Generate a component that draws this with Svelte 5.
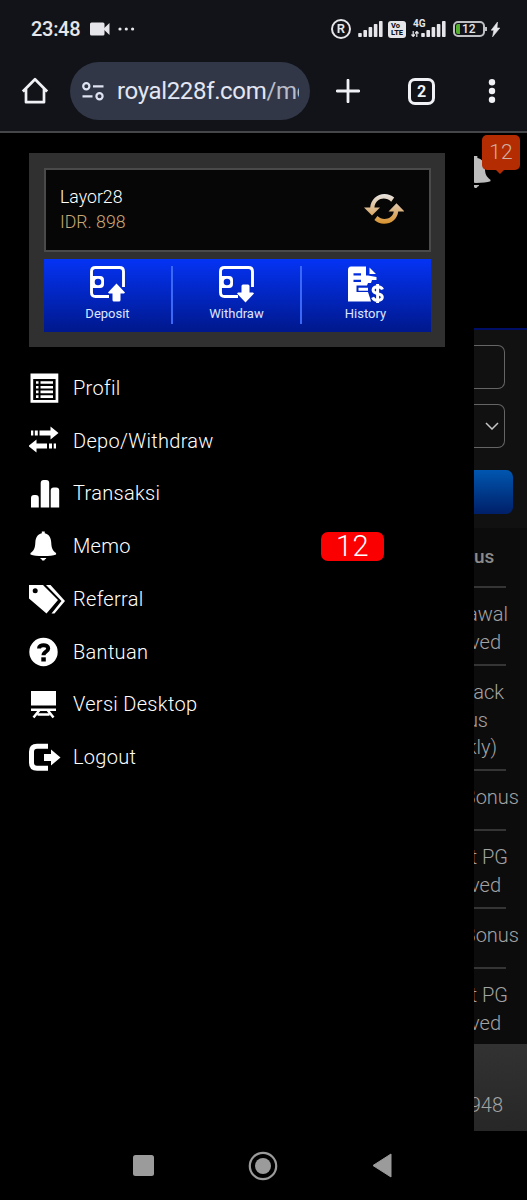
<script lang="ts">
    type Line = { text: string; gap: number };
    type Row = { height: number; lines: Line[] };

    const actions = [
        { id: "deposit", label: "Deposit" },
        { id: "withdraw", label: "Withdraw" },
        { id: "history", label: "History" },
    ];

    const menu = [
        { id: "profile", label: "Profil" },
        { id: "transfer", label: "Depo/Withdraw" },
        { id: "chart", label: "Transaksi" },
        { id: "bell", label: "Memo", count: 12 },
        { id: "tags", label: "Referral" },
        { id: "help", label: "Bantuan" },
        { id: "desktop", label: "Versi Desktop" },
        { id: "logout", label: "Logout" },
    ];

    // gap = space between the end of the line and the screen edge
    const rows: Row[] = [
        { height: 78, lines: [{ text: "awal", gap: 19 }, { text: "ved", gap: 26 }] },
        { height: 105, lines: [{ text: "ack", gap: 23 }, { text: "us", gap: 39 }, { text: "kly)", gap: 30 }] },
        { height: 60, lines: [{ text: "Bonus", gap: 8 }] },
        { height: 78, lines: [{ text: "t PG", gap: 19 }, { text: "ved", gap: 26 }] },
        { height: 60, lines: [{ text: "Bonus", gap: 8 }] },
        { height: 77, lines: [{ text: "t PG", gap: 19 }, { text: "ved", gap: 26 }] },
    ];

    const bars = [4, 7, 10, 13, 16];
</script>

{#snippet signal()}
    <svg class="signal" width="25" height="16" viewBox="0 0 25 16">
        {#each bars as h, i}
            <rect x={i * 5.2 + 0.2} y={16 - h} width="3.6" height={h} rx="0.8" />
        {/each}
    </svg>
{/snippet}

{#snippet bell()}
    <path d="M12.500 0h3v1.700c4.500.8 6.500 4.500 6.700 9 .2 6 1.500 7.800 5 10.500v1.300c-3 1-7 1.500-13.200 1.500S3.800 23.500.8 22.500v-1.300c3.500-2.700 4.800-4.500 5-10.500.2-4.500 2.200-8.200 6.700-9z" />
    <path d="M11 26h6c0 1-1 1.200-1.600 1.600-.2 1.200-2.600 1.200-2.800 0-.6-.4-1.600-.6-1.600-1.600z" />
{/snippet}

<div class="phone">
    <header>
        <div class="status">
            <span class="time">23:48</span>
            <svg class="camera" width="20" height="14" viewBox="0 0 20 14">
                <rect width="14.500" height="13" y=".5" rx="1.500" />
                <path d="M14 6.200 19.500 1v12L14 7.800z" />
            </svg>
            <svg class="dots" width="17" height="4" viewBox="0 0 17 4">
                <circle cx="2" cy="2" r="1.600" /><circle cx="8.300" cy="2" r="1.600" /><circle cx="14.600" cy="2" r="1.600" />
            </svg>
            <span class="registered">R</span>
            {@render signal()}
            <span class="volte"><b>Vo</b><b>LTE</b></span>
            <div class="network">
                <svg class="updown" width="8" height="6" viewBox="0 0 8 6">
                    <path d="M2.200 0v5M.5 3.500l1.700 2 1.700-2M5.800 6V1M4.100 2.500l1.700-2 1.700 2" fill="none" stroke="#e6e6ea" stroke-width="1.200" />
                </svg>
                {@render signal()}
                <span class="gen">4G</span>
            </div>
            <div class="battery"><i></i><span>12</span></div>
            <svg class="bolt" width="9" height="15" viewBox="0 0 9 15">
                <path d="M6.500 0 .2 8.200h2.600L1.600 14.800 8.800 6H6z" stroke="#e6e6ea" stroke-width=".6" />
            </svg>
        </div>
        <div class="toolbar">
            <svg class="home" width="28" height="28" viewBox="0 0 28 28">
                <path d="M1.800 14.500 14 2.200l12.200 12.300M5 11.800v13.400h18V11.800" fill="none" stroke="#f0f1f5" stroke-width="2.700" stroke-linejoin="round" />
            </svg>
            <div class="address">
                <svg width="22" height="19" viewBox="0 0 22 19" fill="none" stroke="#e0e4f2" stroke-width="2.200">
                    <circle cx="4.300" cy="4.300" r="3.100" /><path d="M11 4.300h10.500M.5 14.300h10" /><circle cx="17.500" cy="14.300" r="3.100" />
                </svg>
                <span class="url">royal228f.com<em>/mo</em></span>
            </div>
            <svg class="plus" width="24" height="24" viewBox="0 0 24 24">
                <path d="M12 1.200v21.600M1.200 12h21.600" stroke="#f0f1f5" stroke-width="2.800" stroke-linecap="round" />
            </svg>
            <span class="tabs">2</span>
            <svg class="more" width="8" height="26" viewBox="0 0 8 26">
                <circle cx="4" cy="4.300" r="3.200" /><circle cx="4" cy="13" r="3.200" /><circle cx="4" cy="21.700" r="3.200" />
            </svg>
        </div>
    </header>

    <main>
        <nav class="drawer">
            <section class="card">
                <div class="user">
                    <div>
                        <p>Layor28</p>
                        <p class="balance">IDR. 898</p>
                    </div>
                    <svg width="40" height="30" viewBox="0 0 40 30">
                        <defs>
                            <linearGradient id="gold" x1="0" y1="0" x2="0" y2="30" gradientUnits="userSpaceOnUse">
                                <stop offset="0" stop-color="#e6e3e0" />
                                <stop offset=".5" stop-color="#dcb98c" />
                                <stop offset="1" stop-color="#d9922c" />
                            </linearGradient>
                        </defs>
                        <path fill="url(#gold)" d="M0 13.500h6.200C7 5.500 13 0 20.500 0c3.700 0 7 1.300 9.700 3.600l-3 4.200C22 2.200 11.500 3.500 10.400 13.500H16L8 21.500zM40.500 17.500h-6.300C33.400 25 27.500 29.800 20 29.800c-3.700 0-7-1.400-9.600-3.700l3-4C19 27.500 28.500 25 29.800 17.500H24.500l8-8.300z" />
                    </svg>
                </div>
                <div class="actions">
                    {#each actions as action}
                        <button>
                            <svg width="37" height="37" viewBox="0 0 37 37" fill="#fff">
                                {#if action.id === "history"}
                                    <path fill-rule="evenodd" d="M4 .5h15v9h2l8.500 1.500V14H25l-1 3h-3l-1 2.500H9.500v6.500h11.500l2 6 1 3.500H1V4Q1 .5 4 .5zM6.500 9.500H14V7.300H6.500zm0 6.500H14v-2.300H6.500z" />
                                    <path d="M11.500 21.700H21v3h-9.500zM22.500 1.500 29 8h-6.500z" />
                                    <path d="M35.500 23.500c-.8-2-2.500-2.700-4.700-2.700-3 0-4.700 1.300-4.700 3.300 0 5 9.200 2.200 9.200 7 0 2.200-2 3.300-4.600 3.300-2.700 0-4.300-1-5.100-3M30.600 18v19" fill="none" stroke="#fff" stroke-width="3" />
                                {:else}
                                    <path d="M34.500 21V5.500q0-4-4-4h-24q-4 0-4 4v21q0 4 4 4H20" fill="none" stroke="#fff" stroke-width="2.900" />
                                    <path fill-rule="evenodd" d="M2 10h9q4 0 4 4v4q0 4-4 4H2zM9 12.700a3.300 3.300 0 1 0 0 6.600 3.300 3.300 0 1 0 0-6.600z" />
                                    {#if action.id === "deposit"}
                                        <path d="m27.500 17.500 8.500 9-1 1h-3.500V34q0 1.500-1.500 1.500h-5q-1.500 0-1.500-1.500v-6.500H20l-1-1z" />
                                    {:else}
                                        <path d="m27.500 36.500 8.500-9-1-1h-3.500V20q0-1.500-1.500-1.500h-5q-1.500 0-1.500 1.500v6.500H20l-1 1z" />
                                    {/if}
                                {/if}
                            </svg>
                            {action.label}
                        </button>
                    {/each}
                </div>
            </section>

            <ul>
                {#each menu as item}
                    <li>
                        <svg width="38" height="32" viewBox="0 0 38 32" fill="#fff">
                            {#if item.id === "profile"}
                                <path fill-rule="evenodd" d="M1.500 1.500h27.800v29.200H1.500zM4.200 7v21h22.400V7z" />
                                <path d="M7 10.500h2.500M11.500 10.500H24M7 15.200h2.500M11.500 15.200H24M7 19.900h2.500M11.500 19.900H24M7 24.600h2.500M11.500 24.600H24" stroke="#fff" stroke-width="2.600" />
                            {:else if item.id === "transfer"}
                                <path d="M2 5.500h2.300v5H2zM5.800 5.500h3v5h-3zM10.500 5.500h11V1.500l8 6.500-8 6.500v-4h-11zM27 18.500h-2.300v5H27zM23 18.500h-3v5h3zM18 18.500H7.500v-4L-.5 21l8 6.500v-4H18z" />
                            {:else if item.id === "chart"}
                                <path d="M2 30.500V21q0-3 3-3h1.800q3 0 3 3v9.500zM11.700 30.500V6q0-3 3-3h2.500q3 0 3 3v24.500zM21.700 30.500V13.500q0-3 3-3h2.500q3 0 3 3v17z" />
                            {:else if item.id === "bell"}
                                <g transform="translate(.7 1.500) scale(.97 1.020)">{@render bell()}</g>
                            {:else if item.id === "tags"}
                                <path fill-rule="evenodd" d="M0 2h14l15 15L17.500 30.500 0 15.500zM6.200 5.200a2.500 2.500 0 1 0 0 5 2.500 2.500 0 1 0 0-5z" />
                                <path d="M17 2h4.500L36 18 25.500 30.500H22.500L32.500 18z" />
                            {:else if item.id === "help"}
                                <circle cx="14.500" cy="16" r="14.200" />
                                <path d="M10 12.500c0-4.500 9.200-4.500 9.200 0 0 3.500-4.700 2.700-4.700 6.800" fill="none" stroke="#000" stroke-width="4" />
                                <path d="M12.300 21.300h4.500v4.200h-4.500z" fill="#000" />
                            {:else if item.id === "desktop"}
                                <path d="M2 3h25v14.500H2zM2 20.500h25v2.500H2z" />
                                <path d="M10.500 22 4.500 29.500M18.500 22l6 7.500M8.500 26.500h12" fill="none" stroke="#fff" stroke-width="2.500" />
                            {:else}
                                <path d="M19 5.300H8q-5.500 0-5.500 5.500v11q0 5.500 5.500 5.500h11" fill="none" stroke="#fff" stroke-width="5" />
                                <path d="M15 13h7V8.500l9.500 8-9.500 8V20h-7z" />
                            {/if}
                        </svg>
                        <span class="label">{item.label}</span>
                        {#if item.count}
                            <b class="count">{item.count}</b>
                        {/if}
                    </li>
                {/each}
            </ul>
        </nav>

        <aside class="page">
            <div class="top">
                <svg width="17" height="33" viewBox="12 0 17 33" fill="#bdbdbd">
                    <g transform="translate(-2 0) scale(1.120)">{@render bell()}</g>
                </svg>
                <span class="bubble">12</span>
            </div>
            <div class="form">
                <div class="field"></div>
                <div class="field">
                    <svg width="14" height="8" viewBox="0 0 14 8"><path d="m1 1 6 6 6-6" fill="none" stroke="#c4c4c4" stroke-width="1.500" /></svg>
                </div>
                <div class="submit"></div>
            </div>
            <div class="table">
                <div class="head">us</div>
                {#each rows as row}
                    <div class="row" style="height: {row.height}px">
                        {#each row.lines as line}
                            <p style="margin-right: {line.gap}px">{line.text}</p>
                        {/each}
                    </div>
                {/each}
            </div>
            <div class="footer">948</div>
        </aside>
    </main>

    <footer>
        <svg width="21" height="21"><rect width="21" height="21" rx="2.500" /></svg>
        <svg width="30" height="30" viewBox="0 0 30 30">
            <circle cx="15" cy="15" r="13.200" fill="none" stroke="#9b9b9b" stroke-width="2.200" />
            <circle cx="15" cy="15" r="8" />
        </svg>
        <svg width="20" height="25" viewBox="0 0 20 25"><path d="M1 12.500 19 1v23z" stroke="#9b9b9b" stroke-linejoin="round" /></svg>
    </footer>
</div>

<style>
    :global(body) {
        background: #000;
    }

    .phone {
        width: 527px;
        height: 1200px;
        display: flex;
        flex-direction: column;
        overflow: hidden;
        background: #000;
        color: #fff;
        font-family: Roboto, sans-serif;
    }
    .phone * {
        box-sizing: border-box;
    }
    p, ul {
        margin: 0;
        padding: 0;
        list-style: none;
    }
    svg {
        flex: none;
        display: block;
    }

    header {
        height: 133px;
        background: #121318;
        border-bottom: 2px solid #45464a;
    }
    .status {
        height: 58px;
        padding-left: 31px;
        display: flex;
        align-items: center;
        fill: #e6e6ea;
        color: #e6e6ea;
    }
    .time {
        width: 50px;
        font-size: 20px;
        font-weight: 500;
        letter-spacing: -0.3px;
    }
    .camera {
        margin-left: 9px;
    }
    .dots {
        margin-left: 8px;
    }
    .registered {
        width: 20px;
        height: 20px;
        margin-left: 196px;
        border: 2px solid #e6e6ea;
        border-radius: 50%;
        font-size: 13px;
        font-weight: 600;
        line-height: 16px;
        text-align: center;
    }
    .signal {
        margin-left: 7px;
    }
    .volte {
        width: 18px;
        height: 17px;
        margin-left: 5px;
        padding-top: 1px;
        border-radius: 3px;
        background: #e6e6ea;
        color: #121318;
        font-size: 7.500px;
        line-height: 7.500px;
        display: flex;
        flex-direction: column;
        align-items: center;
    }
    .volte b {
        font-weight: 800;
    }
    .volte b:first-child {
        align-self: flex-start;
        margin-left: 3px;
    }
    .network {
        position: relative;
        margin-left: 5px;
        display: flex;
        align-items: flex-end;
    }
    .network .signal {
        margin-left: 2px;
    }
    .gen {
        position: absolute;
        top: -2px;
        left: 2px;
        font-size: 10px;
        font-weight: 700;
        line-height: 10px;
    }
    .battery {
        position: relative;
        width: 32px;
        height: 16px;
        margin-left: 7px;
        padding: 1px;
        border: 2px solid #bfc0c4;
        border-radius: 5px;
        display: flex;
        align-items: center;
        gap: 2px;
    }
    .battery::after {
        content: "";
        position: absolute;
        right: -4px;
        top: 4px;
        width: 2px;
        height: 4px;
        background: #bfc0c4;
    }
    .battery i {
        width: 4px;
        height: 10px;
        border-radius: 2px 0 0 2px;
        background: #55b030;
    }
    .battery span {
        font-size: 12px;
        font-weight: 500;
        line-height: 12px;
    }
    .bolt {
        margin-left: 6px;
    }

    .toolbar {
        height: 66px;
        padding-left: 21px;
        display: flex;
        align-items: center;
        fill: #f0f1f5;
    }
    .address {
        width: 240px;
        height: 58px;
        margin-left: 21px;
        padding: 0 11px 0 12px;
        border-radius: 29px;
        background: #313747;
        display: flex;
        align-items: center;
    }
    .url {
        margin-left: 13px;
        overflow: hidden;
        white-space: nowrap;
        font-size: 24px;
        line-height: 34px;
        letter-spacing: -0.350px;
        color: #e3e6f3;
    }
    .url em {
        font-style: normal;
        color: #b9bdca;
    }
    .plus {
        margin-left: 26px;
    }
    .tabs {
        width: 27px;
        height: 27px;
        margin-left: 48px;
        border: 3px solid #f0f1f5;
        border-radius: 7px;
        font-size: 16px;
        font-weight: 700;
        line-height: 21px;
        text-align: center;
        color: #f0f1f5;
    }
    .more {
        margin-left: 53px;
    }

    main {
        height: 998px;
        display: flex;
        background: #000;
    }
    .drawer {
        width: 474px;
        flex: none;
        padding: 20px 29px 0;
    }
    .card {
        width: 416px;
        height: 194px;
        padding: 15px 14px 15px 15px;
        background: #303030;
    }
    .user {
        height: 84px;
        padding: 0 25px 0 14px;
        border: 2px solid #4a4a4a;
        background: #060606;
        display: flex;
        align-items: center;
        justify-content: space-between;
        font-size: 17.700px;
        font-weight: 300;
        line-height: 25px;
    }
    .user svg {
        margin-bottom: 2px;
    }
    .balance {
        color: #c9a877;
    }
    .actions {
        height: 73px;
        margin-top: 7px;
        padding: 7px 0 8px;
        background: linear-gradient(#0433f4, #00188c);
        display: flex;
    }
    button {
        flex: 1;
        padding: 0;
        border: 0;
        border-right: 2px solid #3c68f8;
        background: none;
        display: flex;
        flex-direction: column;
        align-items: center;
        font-family: inherit;
        font-size: 13px;
        line-height: 22px;
        color: #dfe5ff;
    }
    button:last-child {
        border-color: transparent;
    }

    ul {
        margin-top: 14.600px;
    }
    li {
        height: 52.750px;
        display: flex;
        align-items: center;
        font-size: 20px;
        font-weight: 300;
        letter-spacing: 0.3px;
    }
    .label {
        width: 248px;
        margin-left: 6px;
    }
    .count {
        width: 63px;
        height: 29px;
        border-radius: 7px;
        background: #fb0000;
        font-size: 29px;
        font-weight: 300;
        line-height: 29px;
        text-align: center;
    }

    .page {
        width: 53px;
        overflow: hidden;
        font-size: 20px;
        font-weight: 300;
        color: #a3a3a3;
    }
    .top {
        position: relative;
        height: 197px;
        padding-top: 23px;
        border-bottom: 2px solid #000e66;
    }
    .bubble {
        position: absolute;
        top: 2px;
        left: 8px;
        width: 38px;
        height: 35px;
        border-radius: 5px;
        background: #b42c02;
        color: #d0b0a4;
        font-size: 21px;
        line-height: 35px;
        text-align: center;
    }
    .bubble::after {
        content: "";
        position: absolute;
        left: 13px;
        bottom: -4px;
        border: 5px solid transparent;
        border-bottom: 0;
        border-top-color: #b42c02;
    }
    .form {
        height: 198px;
        padding-top: 15px;
        background: #111;
    }
    .field {
        width: 31px;
        height: 44px;
        margin-bottom: 15px;
        padding-right: 5px;
        border: 1.500px solid #656565;
        border-left: 0;
        border-radius: 0 7px 7px 0;
        display: flex;
        align-items: center;
        justify-content: flex-end;
    }
    .submit {
        width: 39px;
        height: 44px;
        margin-top: 22px;
        border-radius: 0 7px 7px 0;
        background: linear-gradient(#0056b0, #001f68);
    }
    .table {
        height: 516px;
        background: #0c0c0c;
    }
    .head {
        height: 58px;
        font-size: 19px;
        font-weight: 500;
        line-height: 58px;
        color: #8b8b8b;
    }
    .row {
        padding-top: 15px;
        background: linear-gradient(#353535, #353535) 0 0 / 32px 2px no-repeat;
        display: flex;
        flex-direction: column;
        align-items: flex-end;
        line-height: 27.500px;
        white-space: nowrap;
    }
    .footer {
        height: 87px;
        padding: 47px 24px 0 0;
        background: linear-gradient(#323232, #272727);
        display: flex;
        justify-content: flex-end;
        line-height: 28px;
    }

    footer {
        height: 69px;
        padding: 0 135px 0 133px;
        display: flex;
        align-items: center;
        justify-content: space-between;
        fill: #9b9b9b;
    }
</style>
